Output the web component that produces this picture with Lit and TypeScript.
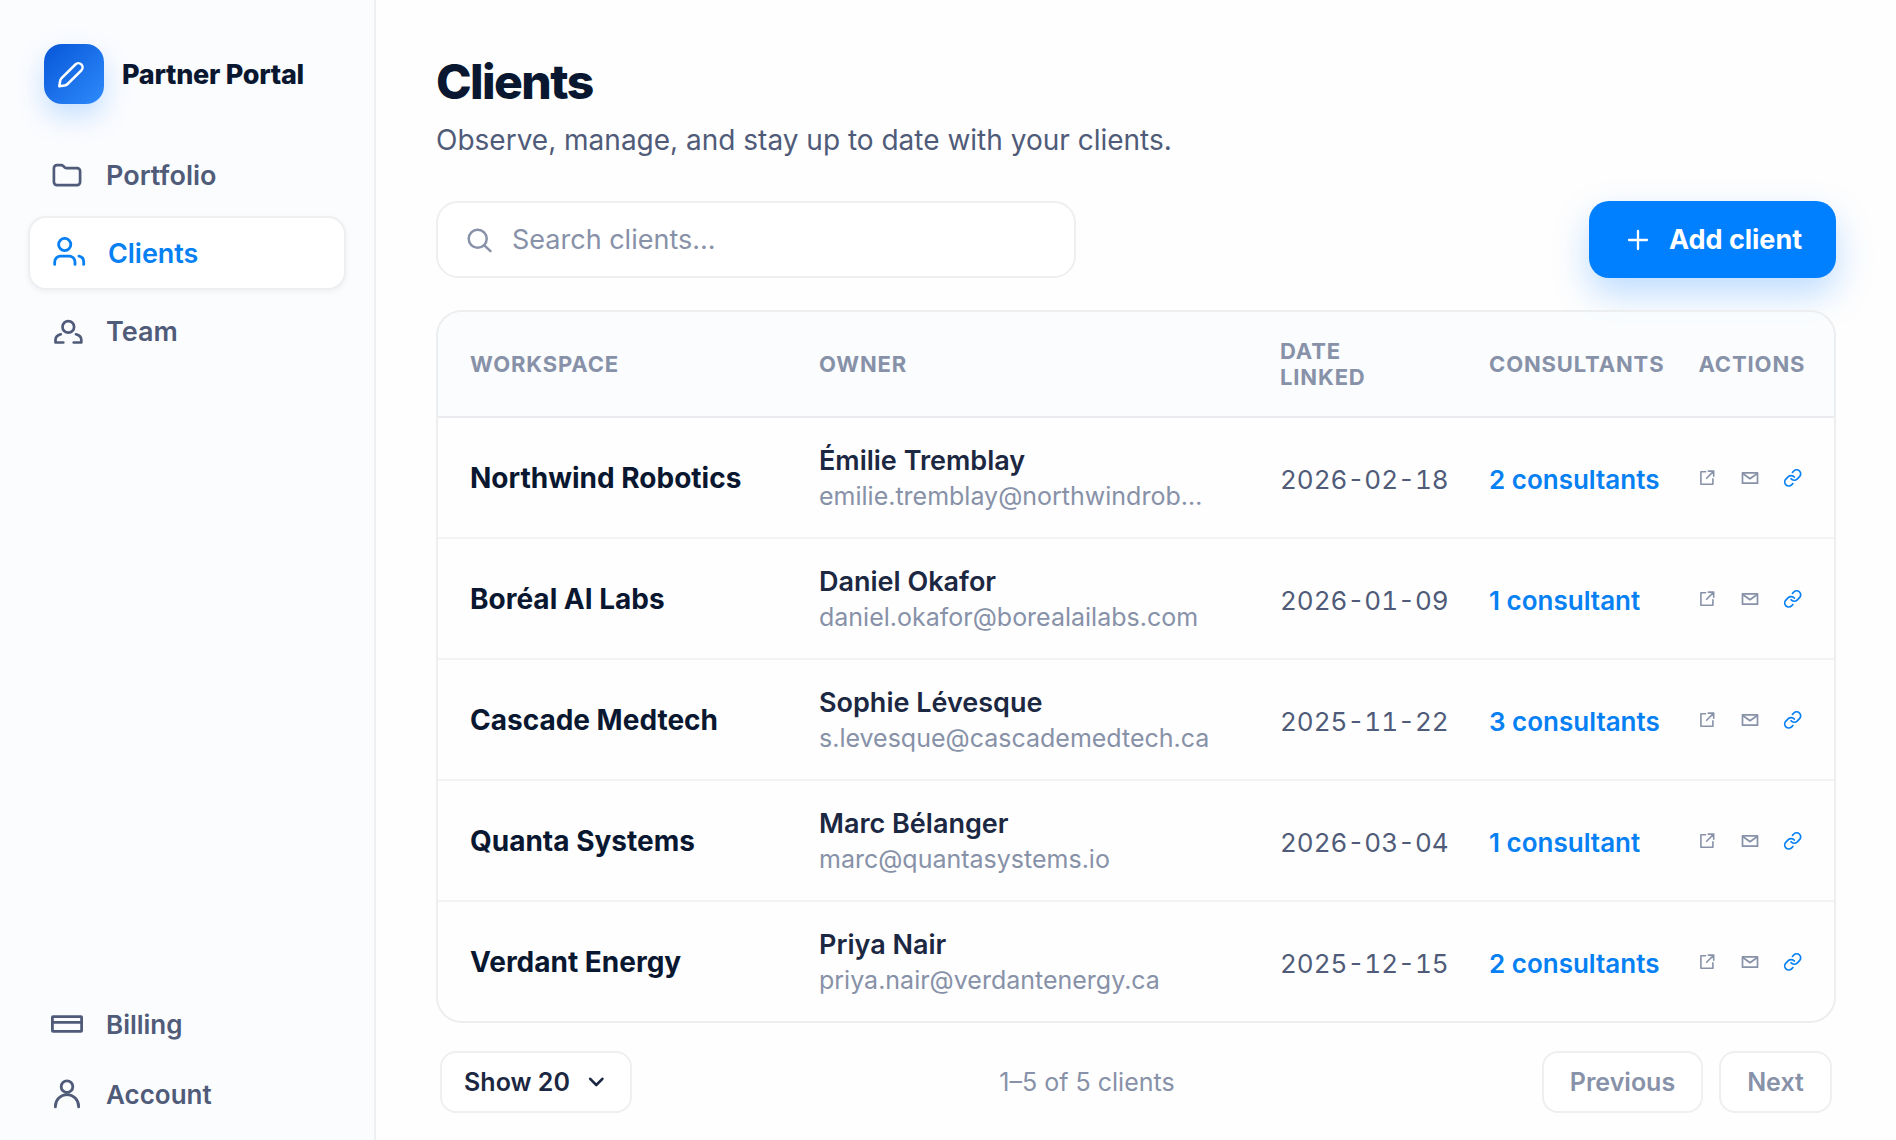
import { LitElement, html, css, svg } from "lit";
import { customElement, property, state } from "lit/decorators.js";

type IconName =
  | "pencil" | "folder" | "clients" | "team" | "card" | "user"
  | "search" | "plus" | "external" | "mail" | "link" | "chevron";

interface IconDef {
  w: number;
  h: number;
  stroke: number;
  body: unknown;
}

const ICONS: Record<IconName, IconDef> = {
  pencil: {
    w: 60, h: 60, stroke: 2.5,
    body: svg`<path d="M15.3 42.3L16.1 37.2Q16.4 35.4 17.6 34.2L31.4 20.5A4.1 4.1 0 0 1 37.4 26.3L23.6 40Q22.3 41.3 20.6 41.5Z"/>`,
  },
  folder: {
    w: 32, h: 32, stroke: 2.7,
    body: svg`<path d="M1.9 9.2a3 3 0 0 1 3-3h4.3c.9 0 1.5.3 2.1.9l1.2 1.1c.7.6 1.3.9 2.2.9h10.4a3 3 0 0 1 3 3v11a3 3 0 0 1-3 3H4.9a3 3 0 0 1-3-3z"/>`,
  },
  clients: {
    w: 32, h: 32, stroke: 2.8,
    body: svg`<circle cx="10.7" cy="7.5" r="6.1"/><path d="M.7 27.4v-2.3a6 6 0 0 1 6-6h8.3a6 6 0 0 1 6 6v2.3M24.9 19.2c3 .6 4.8 2.8 4.8 5.6v2.6"/>`,
  },
  team: {
    w: 32, h: 32, stroke: 2.7,
    body: svg`<circle cx="16.3" cy="11.9" r="5.8"/><path d="M8.8 19.3c-3.3.9-5.3 2.8-5.3 5.6v2.6h7.8M24 19.3c3.3.9 5.3 2.8 5.3 5.6v2.6h-7.6"/>`,
  },
  card: {
    w: 32, h: 32, stroke: 2.8,
    body: svg`<rect x=".4" y="8.6" width="29.2" height="14.8" rx=".6"/><path d="M.4 14.4h29.2"/>`,
  },
  user: {
    w: 32, h: 32, stroke: 2.8,
    body: svg`<circle cx="15" cy="8.7" r="5.8"/><path d="M3.4 28.9v-.7a11.6 11.6 0 0 1 23.2 0v.7"/>`,
  },
  search: {
    w: 26, h: 26, stroke: 2.5,
    body: svg`<circle cx="10.7" cy="11.8" r="9"/><path d="M17.3 18.4l6.2 5.8"/>`,
  },
  plus: { w: 20, h: 20, stroke: 2.3, body: svg`<path d="M10 1v18M1 10h18"/>` },
  external: {
    w: 18, h: 18, stroke: 1.6,
    body: svg`<path d="M6.6 2.8H1.9v12.4h12V9.8M9.3 2.1h5.4v5.2M14.7 2.1L7.6 9.3"/>`,
  },
  mail: {
    w: 18, h: 18, stroke: 1.7,
    body: svg`<rect x="1.5" y="3.9" width="15" height="10.3"/><path d="M1.8 4.5L9 9.7l7.2-5.2"/>`,
  },
  link: {
    w: 18, h: 18, stroke: 1.7,
    body: svg`<path d="M7.1 9.7a4 4 0 0 0 6 .4l2.4-2.4a4 4 0 0 0-5.7-5.7L8.5 3.3"/><path d="M10.3 8.1a4 4 0 0 0-6-.4l-2.4 2.4a4 4 0 0 0 5.7 5.7l1.3-1.3"/>`,
  },
  chevron: { w: 16, h: 16, stroke: 2.6, body: svg`<path d="M1.2 4.8l6.1 6.2 6.1-6.2"/>` },
};

@customElement("ui-icon")
class UiIcon extends LitElement {
  @property() name: IconName = "plus";

  static styles = css`
    :host { display: inline-flex; flex: none; }
    .glyph {
      display: block;
      overflow: visible;
      fill: none;
      stroke: currentColor;
      stroke-linecap: round;
      stroke-linejoin: round;
    }
  `;

  render() {
    const icon = ICONS[this.name];
    return html`<svg class="glyph" width=${icon.w} height=${icon.h}
      viewBox="0 0 ${icon.w} ${icon.h}" stroke-width=${icon.stroke} aria-hidden="true">${icon.body}</svg>`;
  }
}

interface NavEntry {
  label: string;
  icon: IconName;
}

interface Client {
  workspace: string;
  owner: string;
  email: string;
  linked: string;
  consultants: number;
}

const MAIN_NAV: NavEntry[] = [
  { label: "Portfolio", icon: "folder" },
  { label: "Clients", icon: "clients" },
  { label: "Team", icon: "team" },
];

const FOOT_NAV: NavEntry[] = [
  { label: "Billing", icon: "card" },
  { label: "Account", icon: "user" },
];

const CLIENTS: Client[] = [
  { workspace: "Northwind Robotics", owner: "Émilie Tremblay", email: "emilie.tremblay@northwindrob…", linked: "2026-02-18", consultants: 2 },
  { workspace: "Boréal AI Labs", owner: "Daniel Okafor", email: "daniel.okafor@borealailabs.com", linked: "2026-01-09", consultants: 1 },
  { workspace: "Cascade Medtech", owner: "Sophie Lévesque", email: "s.levesque@cascademedtech.ca", linked: "2025-11-22", consultants: 3 },
  { workspace: "Quanta Systems", owner: "Marc Bélanger", email: "marc@quantasystems.io", linked: "2026-03-04", consultants: 1 },
  { workspace: "Verdant Energy", owner: "Priya Nair", email: "priya.nair@verdantenergy.ca", linked: "2025-12-15", consultants: 2 },
];

@customElement("app-root")
class AppRoot extends LitElement {
  @state() private active = "Clients";

  static styles = css`
    :host {
      display: flex;
      height: 1140px;
      overflow: hidden;
      background: #fefefe;
      color: #0a1730;
      font-family: Inter, "Liberation Sans", sans-serif;
      -webkit-font-smoothing: antialiased;
    }
    * { box-sizing: border-box; }

    .sidebar {
      display: flex;
      flex-direction: column;
      flex: none;
      width: 376px;
      padding: 44px 28px 11px;
      background: #fbfcfe;
      border-right: 2px solid #eeeff1;
    }
    .brand {
      display: flex;
      align-items: center;
      gap: 18px;
      margin-bottom: 36px;
      padding-left: 16px;
      font-size: 27px;
      font-weight: 800;
      letter-spacing: -0.27px;
    }
    .logo {
      display: flex;
      width: 60px;
      height: 60px;
      border-radius: 18px;
      background: linear-gradient(135deg, #0756d8, #2e8bfb);
      box-shadow: 0 12px 28px rgba(0, 122, 255, 0.22);
      color: #fff;
    }
    .nav { display: flex; flex-direction: column; gap: 6px; font-size: 27px; }
    .nav-foot { margin-top: auto; gap: 0; font-size: 26px; }
    .nav-item {
      display: flex;
      align-items: center;
      gap: 22px;
      height: 70px;
      padding: 0 24px;
      border-radius: 18px;
      color: #4f5b78;
      font-weight: 600;
      cursor: pointer;
    }
    .nav-item.active {
      height: 74px;
      border: 2px solid #eeeff1;
      background: #fff;
      box-shadow: 0 2px 6px rgba(10, 23, 48, 0.05);
      color: #0680f2;
      letter-spacing: -0.05px;
    }

    .main {
      display: flex;
      flex-direction: column;
      flex: 1;
      min-width: 0;
      padding: 52px 60px 0;
    }
    .title {
      margin: 0;
      font-size: 48px;
      font-weight: 800;
      line-height: 60px;
      letter-spacing: -1.6px;
    }
    .subtitle {
      margin: 10px 0 0;
      color: #4f5b78;
      font-size: 28px;
      line-height: 36px;
    }
    .toolbar {
      display: flex;
      justify-content: space-between;
      margin-top: 43px;
    }
    .search {
      display: flex;
      align-items: center;
      gap: 19px;
      width: 640px;
      height: 77px;
      padding: 0 29px;
      border: 2px solid #eeeff1;
      border-radius: 22px;
      background: #fff;
      color: #8791a8;
      font-size: 27px;
    }
    .add {
      display: flex;
      align-items: center;
      gap: 21px;
      width: 247px;
      height: 77px;
      padding: 0 0 0 39px;
      border: 0;
      border-radius: 20px;
      background: #007fff;
      box-shadow: 0 16px 36px rgba(0, 122, 255, 0.26);
      color: #fff;
      font: inherit;
      font-size: 27px;
      font-weight: 650;
      letter-spacing: -0.02px;
      white-space: nowrap;
    }

    .table {
      margin-top: 32px;
      border: 2px solid #eceef0;
      border-radius: 26px;
      overflow: hidden;
    }
    .row {
      display: grid;
      grid-template-columns: 349px 461px 209px 209.5px 1fr;
      align-items: center;
      height: 121px;
      padding-left: 32px;
      border-bottom: 2px solid #f2f3f4;
    }
    .row:last-child { height: 119px; border-bottom: 0; padding-bottom: 0; }
    .head {
      height: 106px;
      background: rgba(249, 251, 254, 0.8);
      border-bottom-color: #e9ebee;
      color: #8791a8;
      font-size: 22px;
      font-weight: 650;
      line-height: 26px;
      letter-spacing: 0.86px;
    }
    .two-line { width: 110px; }
    .workspace {
      font-size: 28px;
      font-weight: 680;
    }
    .owner { min-width: 0; padding-top: 2px; }
    .owner-name {
      color: #1c2742;
      font-size: 27px;
      font-weight: 560;
      line-height: 36px;
    }
    .owner-mail {
      margin: -1px 0 1px;
      color: #8791a8;
      font-size: 25px;
      line-height: 36px;
      white-space: nowrap;
    }
    .date {
      padding-top: 4px;
      color: #4f5b78;
      font-size: 26px;
      font-variant-numeric: tabular-nums;
    }
    .consultants {
      padding-top: 4px;
      color: #0680f2;
      font-size: 26px;
      font-weight: 600;
    }
    .actions {
      display: flex;
      align-items: center;
      gap: 24.5px;
      color: #8791a8;
    }
    .linked { color: #0680f2; }

    .pager {
      display: flex;
      align-items: center;
      justify-content: space-between;
      margin-top: 28px;
      padding: 0 4px;
      font-size: 25px;
    }
    .pill {
      display: flex;
      align-items: center;
      justify-content: center;
      height: 62px;
      border: 2px solid #eeeff1;
      border-radius: 16px;
      background: #fff;
      font-weight: 600;
    }
    .size { gap: 19px; width: 192px; padding-right: 3px; color: #1c2742; }
    .count { color: #8791a8; }
    .steps { display: flex; gap: 16px; color: #8791a8; }
    .prev { width: 161px; }
    .next { width: 113px; }
  `;

  private navItem(entry: NavEntry) {
    const active = entry.label === this.active;
    return html`<div class="nav-item ${active ? "active" : ""}" @click=${() => (this.active = entry.label)}>
      <ui-icon .name=${entry.icon}></ui-icon><span>${entry.label}</span>
    </div>`;
  }

  private clientRow(c: Client) {
    return html`<div class="row">
      <div class="workspace">${c.workspace}</div>
      <div class="owner">
        <div class="owner-name">${c.owner}</div>
        <div class="owner-mail">${c.email}</div>
      </div>
      <div class="date">${c.linked}</div>
      <div class="consultants">${c.consultants} ${c.consultants === 1 ? "consultant" : "consultants"}</div>
      <div class="actions">
        <ui-icon .name=${"external"}></ui-icon>
        <ui-icon .name=${"mail"}></ui-icon>
        <ui-icon class="linked" .name=${"link"}></ui-icon>
      </div>
    </div>`;
  }

  render() {
    return html`
      <aside class="sidebar">
        <div class="brand"><div class="logo"><ui-icon .name=${"pencil"}></ui-icon></div>Partner Portal</div>
        <nav class="nav">${MAIN_NAV.map((e) => this.navItem(e))}</nav>
        <nav class="nav nav-foot">${FOOT_NAV.map((e) => this.navItem(e))}</nav>
      </aside>
      <main class="main">
        <h1 class="title">Clients</h1>
        <p class="subtitle">Observe, manage, and stay up to date with your clients.</p>
        <div class="toolbar">
          <div class="search"><ui-icon .name=${"search"}></ui-icon><span>Search clients...</span></div>
          <button class="add"><ui-icon .name=${"plus"}></ui-icon>Add client</button>
        </div>
        <section class="table">
          <div class="row head">
            <div>WORKSPACE</div>
            <div>OWNER</div>
            <div class="two-line">DATE LINKED</div>
            <div>CONSULTANTS</div>
            <div>ACTIONS</div>
          </div>
          ${CLIENTS.map((c) => this.clientRow(c))}
        </section>
        <footer class="pager">
          <div class="pill size"><span>Show 20</span><ui-icon .name=${"chevron"}></ui-icon></div>
          <div class="count">1–5 of 5 clients</div>
          <div class="steps"><div class="pill prev">Previous</div><div class="pill next">Next</div></div>
        </footer>
      </main>
    `;
  }
}
